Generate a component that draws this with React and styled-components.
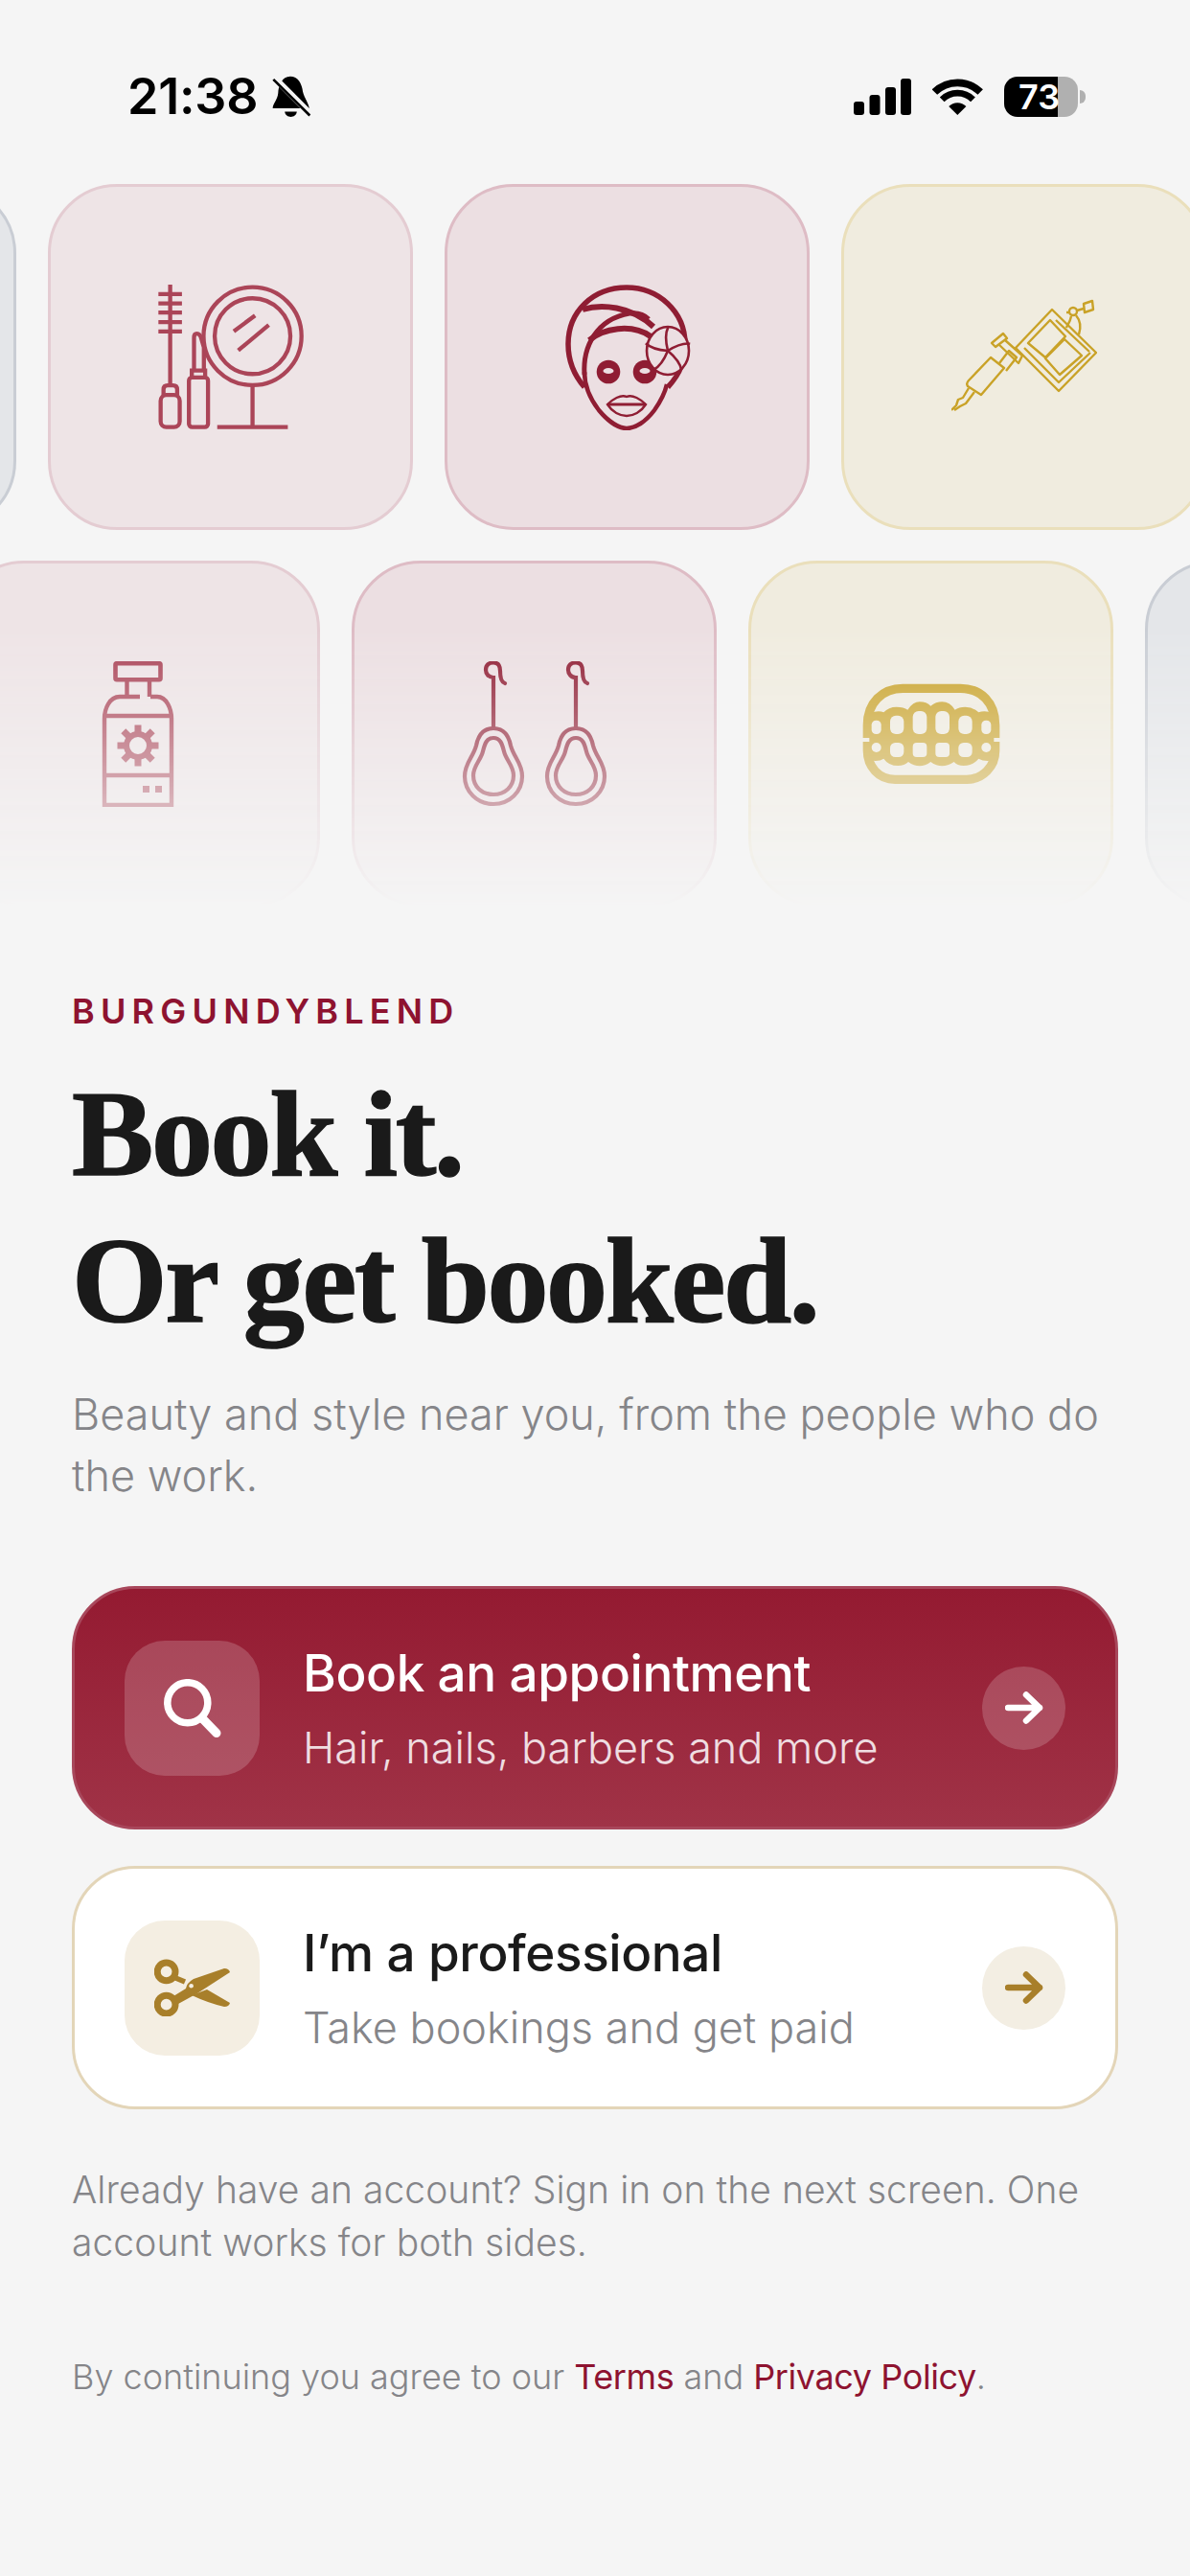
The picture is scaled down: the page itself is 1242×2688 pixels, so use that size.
import React from 'react'
import styled, { createGlobalStyle } from 'styled-components'

const Global = createGlobalStyle`
  html, body { margin: 0; padding: 0; background: #f5f5f5; }
  body { font-family: 'Inter', 'Noto Sans', sans-serif; }
`

const TONES = {
  rose: { bg: '#eee4e6', line: '#e4ccd2', ink: '#ab4558' },
  wine: { bg: '#ecdfe2', line: '#deBcc5', ink: '#8f1d33' },
  gold: { bg: '#f0ecdf', line: '#eadfbb', ink: '#c9a227' },
  slate: { bg: '#e4e6e9', line: '#c9cdd4', ink: '#6b7280' },
}

const Page = styled.div`
  width: 1242px;
  height: 2688px;
  overflow: hidden;
  background: #f5f5f5;
`
const StatusBar = styled.div`
  height: 192px;
  box-sizing: border-box;
  padding: 77px 109px 0 133px;
  display: flex;
  justify-content: space-between;
  align-items: flex-start;
`
const StatusLeft = styled.div`
  display: flex;
  align-items: center;
  gap: 15px;
  height: 48px;
`
const Clock = styled.span`
  font-size: 52px;
  font-weight: 600;
  line-height: 48px;
  letter-spacing: -0.2px;
  color: #000;
`
const StatusRight = styled.div`
  display: flex;
  align-items: center;
  gap: 22px;
  height: 48px;
`
const Battery = styled.div`
  display: flex;
  align-items: center;
  gap: 2px;
`
const BatteryBody = styled.div`
  width: 77px;
  height: 42px;
  border-radius: 14px;
  background: linear-gradient(90deg, #000 73%, #b0b0b0 73%);
  color: #fff;
  font-size: 36px;
  font-weight: 600;
  line-height: 42px;
  box-sizing: border-box;
  padding-left: 15px;
`
const BatteryNub = styled.div`
  width: 6px;
  height: 14px;
  border-radius: 0 7px 7px 0;
  background: #b0b0b0;
`

const TileRow = styled.div`
  display: flex;
  gap: 33px;
  width: max-content;
  margin-left: ${p => p.$offset}px;
  margin-bottom: ${p => (p.$faded ? 0 : 32)}px;
  ${p => p.$faded && 'mask-image: linear-gradient(to bottom, #000 20%, transparent 100%);'}
`
const Tile = styled.div`
  width: 381px;
  height: 361px;
  box-sizing: border-box;
  flex: none;
  border-radius: 72px;
  display: flex;
  align-items: center;
  justify-content: center;
  background: ${p => TONES[p.$tone].bg};
  border: 3px solid ${p => TONES[p.$tone].line};
  color: ${p => TONES[p.$tone].ink};
`
const Art = styled.svg`
  width: 152px;
  height: 152px;
  flex: none;
`

const Content = styled.div`
  padding: 87px 75px 0;
`
const Eyebrow = styled.div`
  font-size: 36px;
  line-height: 44px;
  font-weight: 600;
  letter-spacing: 6.2px;
  color: #8e1330;
`
const Headline = styled.h1`
  margin: 30px 0 0;
  font-family: 'Liberation Serif', serif;
  font-size: 128px;
  line-height: 153px;
  font-weight: 700;
  letter-spacing: -2.4px;
  color: #1a1a1a;
  -webkit-text-stroke: 1.5px #1a1a1a;
`
const Lead = styled.p`
  margin: 31px 0 0;
  font-size: 45px;
  line-height: 64px;
  font-weight: 300;
  letter-spacing: 0;
  color: #858589;
`
const Actions = styled.div`
  margin-top: 83px;
  display: flex;
  flex-direction: column;
  gap: 38px;
`
const Card = styled.div`
  height: 254px;
  box-sizing: border-box;
  border-radius: 66px;
  padding: 0 52px;
  display: flex;
  align-items: center;
  gap: 45px;
  background: ${p => (p.$primary ? 'linear-gradient(180deg, #941a31 0%, #a03347 100%)' : '#fff')};
  border: 3px solid ${p => (p.$primary ? '#a8475b' : '#e3d5b8')};
`
const IconBox = styled.div`
  width: 141px;
  height: 141px;
  flex: none;
  border-radius: 42px;
  display: flex;
  align-items: center;
  justify-content: center;
  background: ${p => (p.$primary ? 'rgba(255, 255, 255, 0.18)' : '#f4eee2')};
`
const CardText = styled.div`
  flex: 1;
  min-width: 0;
  padding-top: 5px;
`
const CardTitle = styled.div`
  font-size: 53px;
  line-height: 77px;
  font-weight: 500;
  letter-spacing: -0.4px;
  color: ${p => (p.$primary ? '#fff' : '#1a1a1a')};
`
const CardSub = styled.div`
  font-size: 45px;
  line-height: 77px;
  font-weight: 300;
  letter-spacing: 0;
  color: ${p => (p.$primary ? '#efdde1' : '#858589')};
`
const Go = styled.div`
  width: 87px;
  height: 87px;
  flex: none;
  border-radius: 50%;
  display: flex;
  align-items: center;
  justify-content: center;
  background: ${p => (p.$primary ? 'rgba(255, 255, 255, 0.18)' : '#f3eee3')};
  color: ${p => (p.$primary ? '#fff' : '#a87f2a')};
`
const Note = styled.p`
  margin: 56px 0 0;
  font-size: 39px;
  line-height: 55px;
  font-weight: 300;
  letter-spacing: 0.06px;
  color: #858589;
`
const Legal = styled.p`
  margin: 88px 0 0;
  font-size: 36px;
  line-height: 50px;
  font-weight: 300;
  letter-spacing: 0;
  color: #858589;
`
const LegalLink = styled.span`
  color: #8e1330;
  font-weight: 400;
  letter-spacing: -0.4px;
`

function BellSlash() {
  return (
    <svg width="41" height="45" viewBox="488 55 124 135">
      <path fill="#000" d="M545 57C520 57 508 85 507 110C505 130 490 145 490 157L605 157C605 145 590 125 585 105C582 80 570 57 545 57Z" />
      <path fill="#000" d="M528 168L566 168C564 190 530 190 528 168Z" />
      <path stroke="#f5f5f5" strokeWidth="20" d="M494 60L612 178" />
      <path stroke="#000" strokeWidth="8" d="M492 66L607 180" />
    </svg>
  )
}

function Signal() {
  return (
    <svg width="60" height="38" viewBox="0 0 60 38" fill="#000">
      <rect x="0" y="24" width="11" height="14" rx="3" />
      <rect x="16.5" y="17" width="11" height="21" rx="3" />
      <rect x="33" y="9" width="11" height="29" rx="3" />
      <rect x="49" y="0" width="11" height="38" rx="3" />
    </svg>
  )
}

function Wifi() {
  return (
    <svg width="53" height="38" viewBox="310 65 157 113" fill="none" stroke="#000">
      <path strokeWidth="23" d="M317 107A101 101 0 0 1 459 107" />
      <path strokeWidth="20" d="M340 130A68 68 0 0 1 436 130" />
      <path fill="#000" stroke="none" d="M388 178L361 151A38 38 0 0 1 415 151Z" />
    </svg>
  )
}

function MakeupArt() {
  return (
    <Art viewBox="490 378 458 458" fill="none" stroke="currentColor" strokeWidth="13">
      <path d="M528 378V692" />
      <path d="M491 408H565M491 437H565M491 466H565M491 496H565M491 525H565" />
      <rect x="498" y="725" width="60" height="101" rx="18" />
      <path d="M507 725V708Q507 695 520 695H537Q550 695 550 708V725" />
      <rect x="587" y="670" width="60" height="156" rx="10" />
      <path d="M596 670V648H638V670" />
      <path d="M603 648V545Q603 532 612 532Q622 532 626 548L634 575V648" />
      <circle cx="787" cy="540" r="154" />
      <circle cx="787" cy="540" r="119" />
      <path d="M728 525L795 475M742 585L838 505" />
      <path d="M787 695V826M676 826H898" />
    </Art>
  )
}

function MaskArt() {
  const petals = [10, 82, 154, 226, 298]
  return (
    <Art viewBox="0 0 152 152" fill="none" stroke="currentColor" strokeWidth="4">
      <path strokeWidth="5.5" d="M31 107C18 92 14 78 14 62C14 28 40 3 75 3C108 3 136 28 136 62C136 78 132 92 118 107" />
      <path strokeWidth="4.5" d="M31 91C31 104 36 118 46 131C56 143 67 150 75 150C84 150 95 143 104 131C111 121 115 113 117 104" />
      <path strokeWidth="6" d="M29 26C48 20 80 22 103 44" />
      <path strokeWidth="5" d="M31 94C29 64 44 36 78 30C86 29 93 31 98 36" />
      <path strokeWidth="6" d="M36 58C50 46 80 40 100 54" />
      <ellipse cx="56" cy="91" rx="12.3" ry="12.3" fill="currentColor" stroke="none" />
      <ellipse cx="94" cy="91" rx="12.3" ry="12.3" fill="currentColor" stroke="none" />
      <ellipse cx="56" cy="90" rx="5.5" ry="3" fill="#ecdfe2" stroke="none" />
      <ellipse cx="94" cy="90" rx="5.5" ry="3" fill="#ecdfe2" stroke="none" />
      <path strokeWidth="2.4" d="M55 125C60 120 69 114 75 117C81 114 90 120 95 125C90 133 82 137 75 137C68 137 60 133 55 125Z" />
      <path strokeWidth="3.2" d="M55 125H95" />
      <ellipse cx="118" cy="69" rx="22" ry="25" fill="#ecdfe2" strokeWidth="2.6" />
      {petals.map(a => (
        <path
          key={a}
          strokeWidth="2.6"
          transform={`rotate(${a} 118 69)`}
          d="M118 69C114 60 112 52 114 45"
        />
      ))}
    </Art>
  )
}

function TattooArt() {
  return (
    <Art viewBox="0 0 152 152" fill="none" stroke="currentColor" strokeWidth="2.4" strokeLinejoin="round">
      <path d="M105 26L151 71L112 111L67 66Z" />
      <path d="M76 66L112 102L145 71M109 37L144 70" />
      <path d="M103 37L119 54L98 76L80 61Z" />
      <path d="M118 57L136 74L113 94L98 77Z" />
      <path d="M41 76L55 87L31 115L17 106Q15 103 18 100Z" />
      <path d="M50 82L60 69L68 76L57 90" />
      <path d="M54 51L58 56L46 65L42 61Z" />
      <path d="M49 62L70 82L74 74L56 58" />
      <path d="M18 108L12 118L7 120L5 126L0 131M24 112L15 124L9 127L3 131" />
      <circle cx="127" cy="28" r="4" />
      <path d="M120 29L123 29M131 27L138 25" />
      <path d="M138 20L147 17L148 26L139 29Z" />
      <path d="M130 32C135 38 135 46 133 52M125 33C124 39 121 42 120 45" />
    </Art>
  )
}

function BottleArt() {
  const teeth = [0, 45, 90, 135, 180, 225, 270, 315]
  return (
    <Art viewBox="0 0 152 152" fill="none" stroke="currentColor" strokeWidth="4.4">
      <rect x="52.5" y="2.2" width="47" height="17" rx="1.5" strokeWidth="4.6" />
      <path d="M64.5 20V36M88 20V37" />
      <path d="M78 37H57C46 37 41 50 41 60V150H111V60C111 50 106 37 96 37H89" />
      <path d="M41 57H111M41 119H111" />
      <circle cx="76" cy="88" r="12" strokeWidth="6" />
      {teeth.map(a => (
        <path key={a} strokeWidth="7" transform={`rotate(${a} 76 88)`} d="M76 75V66.5" />
      ))}
      <path fill="currentColor" stroke="none" d="M81 130H88V137H81ZM94 130H101V137H94Z" />
    </Art>
  )
}

function Drop({ dx }) {
  return (
    <g transform={`translate(${dx} 0)`}>
      <path d="M33 70V17C28 17 25 13 25 9C25 4 28 1.5 33 1.5C38 1.5 40 5 40 10C40 16 41 22 45 23" />
      <path d="M33 70C22 70 17 78 15 88C12 100 3 106 3 120C3 136 16 149 33 149C50 149 63 136 63 120C63 106 54 100 51 88C49 78 44 70 33 70Z" />
      <path d="M33 80C26 80 24 86 22 94C20 103 12 109 12 119C12 131 21 139 33 139C45 139 54 131 54 119C54 109 46 103 44 94C42 86 40 80 33 80Z" />
    </g>
  )
}

function EarringsArt() {
  return (
    <Art viewBox="0 0 152 152" fill="none" stroke="currentColor" strokeWidth="4.2" strokeLinecap="round">
      <Drop dx={0} />
      <Drop dx={86} />
    </Art>
  )
}

const TOP_GAPS = [[507, 545, 30, 43, 14], [565, 530, 43, 58, 18], [636, 516, 44, 72, 18], [707, 516, 44, 72, 18], [779, 530, 43, 58, 18], [851, 545, 30, 43, 14]]
const LOW_GAPS = [[507, 615, 30, 30, 15], [565, 615, 43, 45, 16], [636, 615, 44, 45, 12], [707, 615, 44, 45, 12], [779, 615, 43, 45, 16], [851, 615, 30, 30, 15]]

function TeethArt() {
  return (
    <Art viewBox="466 360 456 456" fill="none" stroke="currentColor" strokeWidth="28">
      <path d="M494 600V560C494 490 540 445 605 445H785C850 445 894 490 894 560V600" />
      <path d="M494 612V640C494 690 530 730 580 730H805C855 730 894 690 894 640V612" />
      <path
        fill="currentColor"
        stroke="none"
        d="M500 522Q530 512 545 520Q560 503 585 503Q608 503 620 512Q637 487 657 487Q680 487 692 500Q708 487 728 487Q752 487 768 512Q780 503 800 503Q825 503 842 520Q860 512 890 522V670Q860 676 842 665Q825 687 795 687Q775 687 765 675Q745 688 728 688Q710 688 692 675Q675 688 657 688Q640 688 622 675Q610 687 590 687Q560 687 545 665Q530 676 500 670Z"
      />
      {TOP_GAPS.concat(LOW_GAPS).map(([x, y, w, h, r]) => (
        <rect key={`${x}-${y}`} x={x} y={y} width={w} height={h} rx={r} fill="#f0ecdf" stroke="none" />
      ))}
    </Art>
  )
}

function SearchGlyph() {
  return (
    <svg width="60" height="61" viewBox="0 0 60 61" fill="none" stroke="#fff" strokeWidth="7.5" strokeLinecap="round">
      <circle cx="24.8" cy="24.7" r="21" />
      <path strokeWidth="9" d="M40 41L55 56.5" />
    </svg>
  )
}

function ScissorsGlyph() {
  return (
    <svg width="79" height="60" viewBox="0 0 79 60" fill="none">
      <circle cx="12.6" cy="13.3" r="9.4" stroke="#a87f2a" strokeWidth="7" />
      <circle cx="12.6" cy="47.7" r="9.4" stroke="#a87f2a" strokeWidth="7" />
      <path stroke="#a87f2a" strokeWidth="5.5" d="M20 19L32 24" />
      <path fill="#a87f2a" d="M20 39L33 31Q34 25 41 21L73 10Q78 10 79 14L45 36L25 47Z" />
      <path fill="#a87f2a" d="M39 38L55 32L79 46Q78 50 73 50Q56 46 39 38Z" />
      <circle cx="38.6" cy="28.3" r="2.3" fill="#f4eee2" />
    </svg>
  )
}

function ArrowGlyph() {
  return (
    <svg width="40" height="34" viewBox="0 0 40 34" fill="none" stroke="currentColor" strokeWidth="6.5" strokeLinecap="round" strokeLinejoin="round">
      <path d="M3 17H36M22 3.5L36 17L22 30.5" />
    </svg>
  )
}

export default function App() {
  return (
    <Page>
      <Global />
      <StatusBar>
        <StatusLeft>
          <Clock>21:38</Clock>
          <BellSlash />
        </StatusLeft>
        <StatusRight>
          <Signal />
          <Wifi />
          <Battery>
            <BatteryBody>73</BatteryBody>
            <BatteryNub />
          </Battery>
        </StatusRight>
      </StatusBar>

      <TileRow $offset={-364}>
        <Tile $tone="slate" />
        <Tile $tone="rose"><MakeupArt /></Tile>
        <Tile $tone="wine"><MaskArt /></Tile>
        <Tile $tone="gold"><TattooArt /></Tile>
      </TileRow>
      <TileRow $offset={-47} $faded>
        <Tile $tone="rose"><BottleArt /></Tile>
        <Tile $tone="wine"><EarringsArt /></Tile>
        <Tile $tone="gold"><TeethArt /></Tile>
        <Tile $tone="slate" />
      </TileRow>

      <Content>
        <Eyebrow>BURGUNDYBLEND</Eyebrow>
        <Headline>Book it.<br />Or get booked.</Headline>
        <Lead>Beauty and style near you, from the people who do the work.</Lead>
        <Actions>
          <Card $primary>
            <IconBox $primary><SearchGlyph /></IconBox>
            <CardText>
              <CardTitle $primary>Book an appointment</CardTitle>
              <CardSub $primary>Hair, nails, barbers and more</CardSub>
            </CardText>
            <Go $primary><ArrowGlyph /></Go>
          </Card>
          <Card>
            <IconBox><ScissorsGlyph /></IconBox>
            <CardText>
              <CardTitle>I’m a professional</CardTitle>
              <CardSub>Take bookings and get paid</CardSub>
            </CardText>
            <Go><ArrowGlyph /></Go>
          </Card>
        </Actions>
        <Note>Already have an account? Sign in on the next screen. One account works for both sides.</Note>
        <Legal>
          By continuing you agree to our <LegalLink>Terms</LegalLink> and <LegalLink>Privacy Policy</LegalLink>.
        </Legal>
      </Content>
    </Page>
  )
}
